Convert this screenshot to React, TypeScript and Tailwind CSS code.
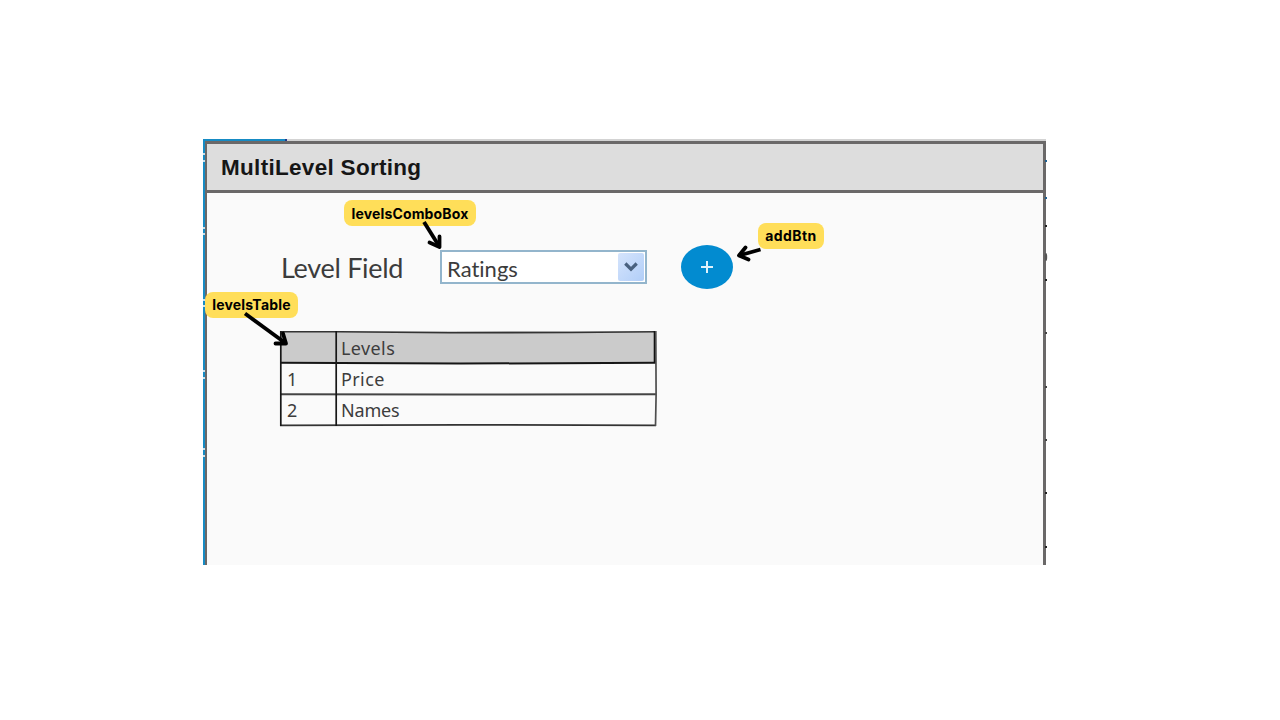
import React from "react";

const LEFT_MARKS = [14, 21, 88, 94, 160, 166, 231, 238, 309, 316];
const RIGHT_MARKS = [
  { y: 22, c: "#1f5f8f" },
  { y: 59, c: "#1f5f8f" },
  { y: 87, c: "#222222" },
  { y: 141, c: "#222222" },
  { y: 194, c: "#444444" },
  { y: 248, c: "#444444" },
  { y: 301, c: "#444444" },
  { y: 354, c: "#222222" },
  { y: 408, c: "#222222" },
];

function Tag({ className, textClass, children }: { className: string; textClass: string; children: string }) {
  return (
    <div className={`absolute flex items-center justify-center rounded-[8px] bg-[#ffde59] font-['Inter',sans-serif] text-[14px] leading-none font-bold whitespace-nowrap text-black ${className}`}>
      <span className={textClass}>{children}</span>
    </div>
  );
}

function TableRow({ index, name, className }: { index: string; name: string; className: string }) {
  return (
    <div className={`grid grid-cols-[56px_320px] items-center font-['Noto_Sans',sans-serif] text-[18px] leading-none text-[#3d3d3d] ${className}`}>
      <span className="pl-[7px]">{index}</span>
      <span className="pl-[5px]">{name}</span>
    </div>
  );
}

function LevelsTable() {
  return (
    <div className="relative ml-[73px] h-[95px] w-[376px]">
      <TableRow index="" name="Levels" className="h-[32px] bg-[#cbcbcb] pt-px tracking-[0.4px]" />
      <TableRow index="1" name="Price" className="h-[31px] pt-px tracking-[0.4px]" />
      <TableRow index="2" name="Names" className="h-[31px] pt-px tracking-[-0.2px]" />
      <svg className="absolute inset-0 overflow-visible" width="376" height="95" viewBox="0 0 376 95" fill="none">
        <path d="M0 .7H60L170 1.8L290 1.5L376 .8" stroke="#333" strokeWidth="1.6" />
        <path d="M0 31.7L180 32.6L376 31.7" stroke="#161616" strokeWidth="2" />
        <path d="M0 63.2L180 63.5L376 63.3" stroke="#444" strokeWidth="1.9" />
        <path d="M0 94.4L180 93.8L376 94.4" stroke="#333" strokeWidth="1.8" />
        <path d="M.8 0V95M56.2 0V95" stroke="#171717" strokeWidth="1.7" />
        <path d="M374.8 0V32" stroke="#111" strokeWidth="2.2" />
        <path d="M375.8 0L376.1 64L375.5 95" stroke="#4e4e4e" strokeWidth="1.7" />
      </svg>
    </div>
  );
}

export default function App() {
  return (
    <main className="h-[720px] w-[1280px] overflow-hidden bg-white pt-[139px] pl-[203px]">
      <div className="relative h-[426px] w-[845px]">
        <div className="flex h-full w-[843px] flex-col">
          <div className="flex h-[2px] shrink-0 bg-[#d3d3d3]">
            <div className="w-[82px] bg-[#168bc4]" />
            <div className="w-[2px] bg-[#25378a]" />
          </div>
          <div className="flex flex-1">
            <div className="w-[2px] bg-[#168bc4]" />
            <section className="flex w-[841px] flex-col border-t-[3px] border-r-[3px] border-l-2 border-[#6a6868] bg-[#fafafa]">
              <header className="flex h-[49px] items-center border-b-[3px] border-[#6a6868] bg-[#dddddd] pl-[14px] font-['Liberation_Sans',sans-serif] text-[22.5px] font-bold text-[#161616]">
                <span className="pt-[2px] tracking-[0.3px] whitespace-nowrap">MultiLevel Sorting</span>
              </header>
              <div className="mt-[52px] flex h-[44px] items-center font-['Lato',sans-serif] text-[#3c3c3c]">
                <label className="ml-[74px] w-[159px] text-[27px] leading-none tracking-[-0.3px] whitespace-nowrap">Level Field</label>
                <div className="flex h-[34px] w-[207px] items-center justify-between border-2 border-[#93b5cc] bg-white pr-px pl-[5px]">
                  <span className="pt-[3px] text-[22px] leading-none tracking-[0.01px]">Ratings</span>
                  <span className="flex h-[28px] w-[26px] items-center justify-center rounded-[2px] bg-linear-to-br from-[#d5e4fc] to-[#b1cef8]">
                    <svg width="14" height="10" viewBox="0 0 14 10" fill="none" stroke="#49617f" strokeWidth="3.2">
                      <path d="M1.3 1.5L7 7.2L12.7 1.5" />
                    </svg>
                  </span>
                </div>
                <button className="ml-[34px] flex h-[44px] w-[52px] items-center justify-center rounded-[50%] bg-[#028bd0]" aria-label="Add level">
                  <svg width="12" height="12" viewBox="0 0 12 12" stroke="#dff2fc" strokeWidth="2">
                    <path d="M0 6H12M6 0V12" />
                  </svg>
                </button>
              </div>
              <div className="mt-[42px]">
                <LevelsTable />
              </div>
            </section>
          </div>
        </div>

        <svg className="pointer-events-none absolute inset-0" width="845" height="426" viewBox="0 0 845 426">
          {LEFT_MARKS.map((y) => (
            <rect key={y} x="0" y={y} width="2" height="2" fill="#c8e2ef" />
          ))}
          {RIGHT_MARKS.map((m) => (
            <rect key={m.y} x="842" y={m.y - 1} width="2" height="2" fill={m.c} />
          ))}
          <ellipse cx="843" cy="118" rx="1.2" ry="4" fill="#555" />
        </svg>

        <Tag className="top-[61px] left-[141px] h-[26px] w-[132px]" textClass="pt-px tracking-[0.15px]">levelsComboBox</Tag>
        <Tag className="top-[84px] left-[555px] h-[26px] w-[66px]" textClass="tracking-[0.4px]">addBtn</Tag>
        <Tag className="top-[153px] left-[2px] h-[26px] w-[93px]" textClass="tracking-[0.2px]">levelsTable</Tag>

        <svg className="pointer-events-none absolute inset-0" width="845" height="426" viewBox="203 139 845 426" fill="none" stroke="#000" strokeWidth="3.8" strokeLinejoin="round">
          <path d="M424 222L439 246" />
          <path d="M429.5 242.5L439.5 247L439.5 236.5" strokeLinecap="round" />
          <path d="M760.5 249.5L739 255.5" />
          <path d="M745.5 247.5L739 255.5L748.5 259.5" strokeLinecap="round" />
          <path d="M245 313.5L286 343.5" />
          <path d="M275.5 343.5L286 343.5L283 333.5" strokeLinecap="round" />
        </svg>
      </div>
    </main>
  );
}
